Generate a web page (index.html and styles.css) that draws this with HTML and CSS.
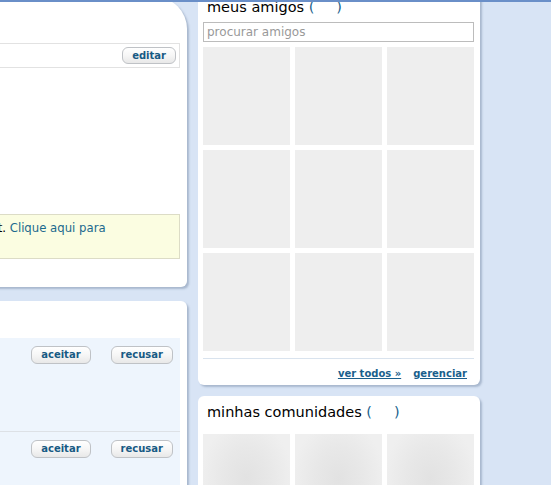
FILE: index.html
```html
<!DOCTYPE html>
<html lang="pt-BR">
<head>
<meta charset="utf-8">
<title>orkut - início</title>
<link rel="stylesheet" href="styles.css">
</head>
<body>
<div class="topbar"></div>
<div class="viewport">
  <div class="columns">
    <div class="col-main">
      <section class="card card-profile">
        <div class="profile-head"></div>
        <div class="profile-bar"><button class="btn">editar</button></div>
        <div class="profile-body"></div>
        <div class="notice"><span class="notice-lead">Você ainda não tem amigos no orkut.</span> <a class="notice-link" href="#">Clique aqui para</a></div>
      </section>
      <section class="card card-requests">
        <div class="requests-head"></div>
        <div class="request">
          <div class="request-actions"><button class="btn btn-lg">aceitar</button><button class="btn btn-lg">recusar</button></div>
        </div>
        <div class="request">
          <div class="request-actions"><button class="btn btn-lg">aceitar</button><button class="btn btn-lg">recusar</button></div>
        </div>
      </section>
    </div>
    <div class="col-side">
      <section class="card card-friends">
        <h2 class="side-title">meus amigos <span class="count">(<span class="count-num"></span>)</span></h2>
        <input class="search" type="text" placeholder="procurar amigos">
        <div class="tiles">
          <div class="tile"></div><div class="tile"></div><div class="tile"></div>
          <div class="tile"></div><div class="tile"></div><div class="tile"></div>
          <div class="tile"></div><div class="tile"></div><div class="tile"></div>
        </div>
        <div class="side-foot">
          <a class="foot-link" href="#">ver todos »</a>
          <a class="foot-link" href="#">gerenciar</a>
        </div>
      </section>
      <section class="card card-communities">
        <h2 class="side-title">minhas comunidades <span class="count">(<span class="count-num"></span>)</span></h2>
        <div class="tiles tiles-comm">
          <div class="tile tile-blur"></div><div class="tile tile-blur"></div><div class="tile tile-blur"></div>
        </div>
      </section>
    </div>
  </div>
</div>
</body>
</html>
```

FILE: styles.css
```css
* { box-sizing: border-box; }

body {
  margin: 0;
  background: #d8e4f5;
  font-family: "DejaVu Sans", Verdana, sans-serif;
  color: #000;
}

.topbar {
  height: 2px;
  background: #6a8fc8;
}

.viewport {
  height: 483px;
  overflow: hidden;
}

.columns {
  display: flex;
  align-items: flex-start;
  gap: 11px;
  margin-left: -320px;
}

.col-main {
  flex: 0 0 507px;
  display: flex;
  flex-direction: column;
  gap: 14px;
  margin-top: -5px;
}

.col-side {
  flex: 0 0 282px;
  display: flex;
  flex-direction: column;
  gap: 11px;
  margin-top: -14px;
}

.card {
  background: #fff;
  box-shadow: 2px 2px 2px rgba(110, 130, 160, 0.45);
}

/* profile card */
.card-profile {
  border-radius: 0 32px 6px 6px;
  padding: 0 7px 28px 10px;
}

.profile-head {
  height: 46px;
}

.profile-bar {
  height: 25px;
  border: 1px solid #e2e2e2;
  display: flex;
  justify-content: flex-end;
  align-items: center;
  padding-right: 3px;
}

.profile-body {
  height: 146px;
}

.notice {
  height: 45px;
  background: #fbfde1;
  border: 1px solid #dcdcc6;
  padding: 5px 10px 0;
  font-size: 11.7px;
  line-height: 16px;
  white-space: nowrap;
}

.notice-lead {
  display: inline-block;
  width: 305px;
  text-align: right;
}

.notice-link {
  color: #1c6a8e;
  text-decoration: none;
}

/* buttons */
.btn {
  font-family: "DejaVu Sans", Verdana, sans-serif;
  font-size: 10px;
  font-weight: bold;
  color: #175a84;
  height: 17px;
  line-height: 15px;
  padding: 0 9px;
  border: 1px solid #bfc2c6;
  border-radius: 6px;
  background: linear-gradient(#ffffff 0%, #f6f6f6 50%, #e8e8e8 100%);
  cursor: pointer;
}

.btn-lg {
  height: 18px;
  line-height: 16px;
  padding: 0 9px;
}

/* requests card */
.card-requests {
  border-radius: 0 6px 0 0;
  padding: 0 7px 0 10px;
}

.requests-head {
  height: 37px;
}

.request {
  height: 94px;
  background: #eef5fd;
  border-bottom: 1px solid #dde1e6;
  padding: 8px 7px 0 0;
}

.request-actions {
  display: flex;
  justify-content: flex-end;
  gap: 20px;
}

/* side cards */
.card-friends {
  border-radius: 0 0 6px 6px;
  padding: 10px 6px 4px 5px;
}

.card-communities {
  border-radius: 6px 6px 0 0;
  padding: 7px 6px 0 5px;
}

.side-title {
  margin: 0 0 0 4px;
  font-size: 14.5px;
  font-weight: normal;
  line-height: 18px;
  white-space: nowrap;
}

.count {
  color: #1a5f8c;
}

.count-num {
  display: inline-block;
  width: 22px;
}

.search {
  display: block;
  width: 100%;
  height: 20px;
  margin-top: 6px;
  border: 1px solid #bcbcbc;
  padding: 0 3px;
  font-family: "DejaVu Sans", Verdana, sans-serif;
  font-size: 12px;
  color: #666;
  outline: none;
}

.search::placeholder {
  color: #999;
}

.tiles {
  display: grid;
  grid-template-columns: repeat(3, 1fr);
  grid-auto-rows: 98px;
  gap: 5px;
  margin-top: 5px;
}

.tiles-comm {
  margin-top: 13px;
}

.tile {
  background: #eeeeee;
}

.tile-blur {
  background: radial-gradient(ellipse at 50% 45%, #e2e2e2 0%, #e8e8e8 40%, #efefef 75%);
}

.side-foot {
  margin-top: 7px;
  border-top: 1px solid #d9e3ee;
  padding: 8px 7px 0 0;
  display: flex;
  justify-content: flex-end;
  gap: 12px;
  line-height: 14px;
}

.foot-link {
  font-size: 10px;
  font-weight: bold;
  color: #1a5f8c;
  text-decoration: underline;
}
```
